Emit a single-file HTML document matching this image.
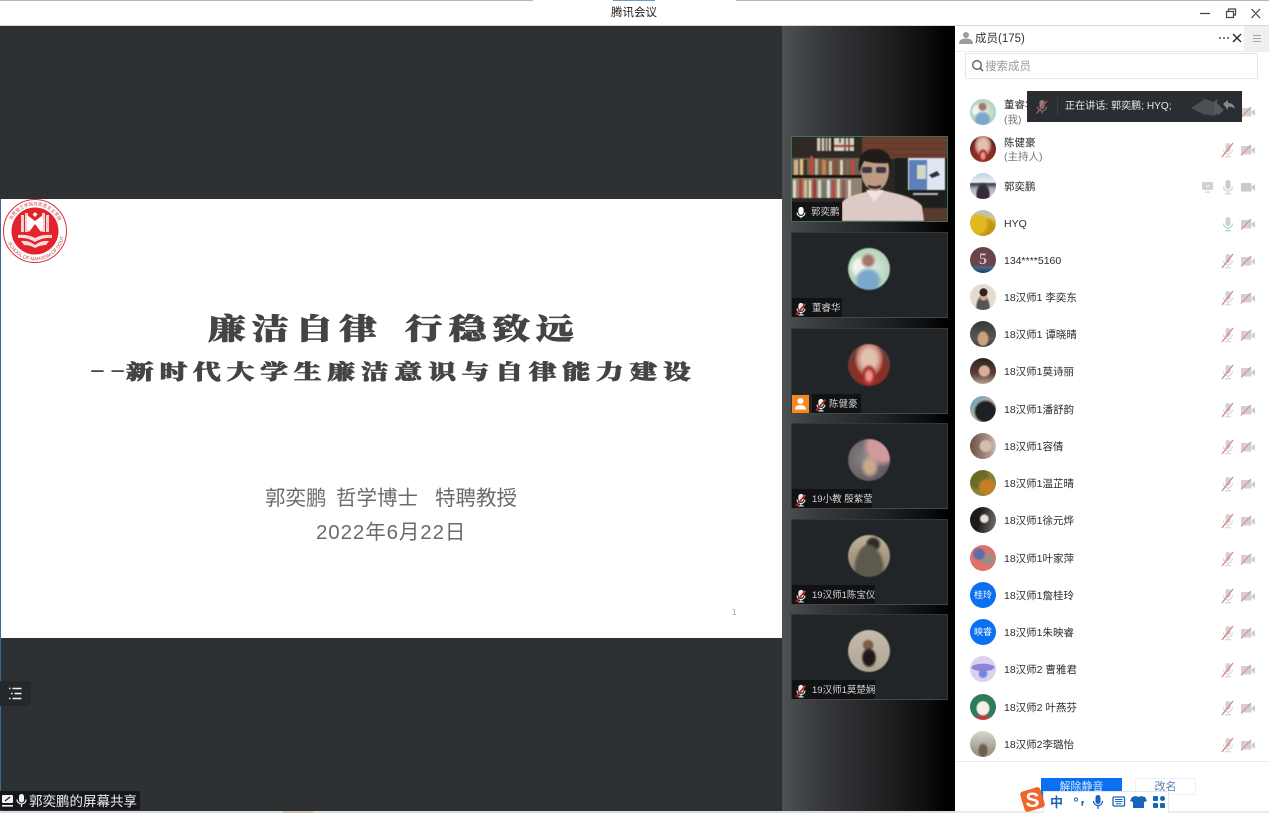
<!DOCTYPE html>
<html lang="zh"><head><meta charset="utf-8"><title>腾讯会议</title>
<style>
*{box-sizing:border-box}
html,body{margin:0;padding:0;width:1269px;height:813px;overflow:hidden;background:#fff;font-family:"Liberation Sans","Noto Sans CJK SC",sans-serif}
body{filter:blur(.3px)}
.a{position:absolute;white-space:nowrap}
#main{position:absolute;left:0;top:26px;width:782px;height:785px;background:#2e3134}
#slide{position:absolute;left:1px;top:199px;width:781px;height:439px;background:#fff}
#side{position:absolute;left:782px;top:26px;width:173px;height:785px;background:linear-gradient(90deg,#4e5153 0,#37393c 22%,#202224 58%,#0c0c0d 85%,#000 95%,#000 100%)}
.th{position:absolute;left:791px;width:157px;height:86px;background:#222528;border:1px solid #34373a;border-bottom-color:#44474a}
.av{position:absolute;left:56px;top:15px;width:42px;height:42px;border-radius:50%;filter:blur(.5px)}
.lb{position:absolute;left:0;bottom:0;height:19px;background:#111214;color:#d4d4d4;font-size:9.5px;line-height:22px;padding:0 3px 0 20px;white-space:nowrap}
.lb svg{position:absolute;left:2px;top:4px}
.ti{position:absolute;font-family:"Noto Serif CJK SC","Noto Sans CJK SC",serif;font-weight:900;color:#444;white-space:nowrap;transform-origin:0 50%;-webkit-text-stroke:.7px #444}
#panel{position:absolute;left:955px;top:26px;width:314px;height:785px;background:#fff}
.r{position:absolute;left:955px;width:314px;height:37px;font-size:10.5px;line-height:39px;color:#2c2c2c}
.r>span{position:absolute;left:49px;top:0;white-space:nowrap}
.r i{position:absolute;left:15px;top:5px;width:26px;height:26px;border-radius:50%;display:block;font-style:normal;color:#fff;text-align:center;font-size:9px;line-height:26px}
.r svg{position:absolute;top:11px}
.r .mi{left:265px}.r .ca{left:285px}.r .sc{left:245px}
</style></head><body>
<svg width="0" height="0" style="position:absolute">
<symbol id="mu" viewBox="0 0 16 16"><rect x="5.500" y="1" width="5" height="9" rx="2.500" fill="#d2d2d2"/><path d="M3.500 7.500a4.500 4.500 0 0 0 9 0M8 12v2.500M5 14.800h6" fill="none" stroke="#d2d2d2" stroke-width="1"/><path d="M2 15L13 1" stroke="#d98585" stroke-width="1.400"/></symbol>
<symbol id="ms" viewBox="0 0 16 16"><rect x="5.500" y="1" width="5" height="9" rx="2.500" fill="#cacaca"/><path d="M3.500 7.500a4.500 4.500 0 0 0 9 0M8 12v2.500M5 14.800h6" fill="none" stroke="#cacaca" stroke-width="1"/></symbol>
<symbol id="mg" viewBox="0 0 16 16"><rect x="5.500" y="1" width="5" height="9" rx="2.500" fill="#cbd4cf"/><path d="M3.500 7.500a4.500 4.500 0 0 0 9 0M8 12v2.500M5 14.800h6" fill="none" stroke="#a0d0b6" stroke-width="1"/></symbol>
<symbol id="cu" viewBox="0 0 16 16"><rect x="1" y="4" width="10.500" height="8.500" rx="1" fill="#d6cfcf"/><path d="M12 7.500l3-2.500v7l-3-2.500z" fill="#cccccc"/><path d="M1 13.500L11 3" stroke="#d98f8f" stroke-width="1.200"/></symbol>
<symbol id="cs" viewBox="0 0 16 16"><rect x="1" y="4" width="10.500" height="8.500" rx="1" fill="#cacaca"/><path d="M12 7.500l3-2.500v7l-3-2.500z" fill="#cacaca"/></symbol>
<symbol id="wm" viewBox="0 0 16 16"><rect x="5" y="1" width="6" height="9" rx="3" fill="#eee"/><path d="M3.500 7.500a4.500 4.500 0 0 0 9 0M8 12v2.500M5 14.800h6" fill="none" stroke="#eee" stroke-width="1.300"/><path d="M2.500 14.500L13 2" stroke="#b5302f" stroke-width="2"/></symbol>
</svg>

<!-- title bar -->
<div class="a" style="left:0;top:0;width:533px;height:1px;background:#b4b6b8"></div>
<div class="a" style="left:613px;top:0;width:42px;height:1px;background:#6f9cc0"></div>
<div class="a" style="left:736px;top:0;width:533px;height:1px;background:#b4b6b8"></div>
<div class="a" style="left:0;top:25px;width:1269px;height:1px;background:#d8d8d8"></div>
<div class="a" style="left:594px;width:80px;text-align:center;top:5px;font-size:11.500px;line-height:17px;color:#222">腾讯会议</div>
<svg class="a" style="left:1195px;top:5px" width="70" height="16" fill="none" stroke="#444" stroke-width="1.200"><path d="M5 8.500h10M31.500 6.500h7v6h-7zM33.500 6.500v-2.500h7v6h-2M56.500 4l8.500 9M65 4l-8.500 9"/></svg>

<div id="main"></div>
<div class="a" style="left:0;top:199px;width:1px;height:612px;background:#3d6a94"></div>

<!-- slide -->
<div id="slide"></div>
<svg class="a" style="left:2px;top:198px" width="68" height="68" viewBox="0 0 68 68">
<circle cx="33" cy="33" r="31.500" fill="#fff" stroke="#d8333a" stroke-width="1"/>
<circle cx="33" cy="33" r="23.500" fill="#e2232b"/>
<path id="tp" d="M3.500 33a29.500 29.500 0 0 0 59 0" fill="none"/>
<text font-size="4.800" fill="#c9474c" font-family="Liberation Sans"><textPath href="#tp" startOffset="12">SCHOOL OF MARXISM OF DGUT</textPath></text>
<path id="tq" d="M7.500 33a25.500 25.500 0 0 1 51 0" fill="none"/>
<text font-size="4.500" fill="#c9474c" font-family="Noto Sans CJK SC"><textPath href="#tq" startOffset="11">东莞理工学院马克思主义学院</textPath></text>
<path d="M19 17h3v17h-3zM23 15h3v19h-3zM40 15h3v19h-3zM44 17h3v17h-3z" fill="#f4d0d0"/>
<path d="M25 17l8 6 8-6v14l-2 3-6-8-6 8-2-3z" fill="#fff"/>
<path d="M33 14l2.500 2.500-2.500 2.500-2.500-2.500z" fill="#fff"/>
<path d="M16 37q9-1 17 3 8-4 17-3v3q-9-1-17 4-8-5-17-4zM19 43q8-1 14 4 6-5 14-4l-3 4q-6 0-11 3-5-3-11-3z" fill="#f7dcdc"/>
</svg>
<div class="ti" style="left:208px;top:308px;font-size:29px;line-height:40px;letter-spacing:4.600px;transform:scaleX(1.300)">廉洁自律</div>
<div class="ti" style="left:405px;top:308px;font-size:29px;line-height:40px;letter-spacing:4.600px;transform:scaleX(1.300)">行稳致远</div>
<div class="ti" style="left:89px;top:355px;font-size:22px;line-height:30px;letter-spacing:1.500px;transform:scaleX(2.300);font-family:'Liberation Sans',sans-serif;font-weight:400;-webkit-text-stroke:0">--</div>
<div class="ti" style="left:126px;top:355px;font-size:20.500px;line-height:30px;letter-spacing:4.400px;transform:scaleX(1.348)">新时代大学生廉洁意识与自律能力建设</div>
<div class="a" style="left:265px;top:485px;font-size:20.500px;line-height:28px;color:#6b6b6b">郭奕鹏</div>
<div class="a" style="left:336px;top:485px;font-size:20.500px;line-height:28px;color:#6b6b6b">哲学博士</div>
<div class="a" style="left:435px;top:485px;font-size:20.500px;line-height:28px;color:#6b6b6b">特聘教授</div>
<div class="a" style="left:316px;top:519px;font-size:20.500px;line-height:28px;color:#6b6b6b;letter-spacing:.9px">2022年6月22日</div>
<div class="a" style="left:732px;top:608px;font-size:8px;line-height:10px;color:#999">1</div>

<!-- bottom-left controls -->
<div class="a" style="left:0;top:681px;width:31px;height:25px;background:#25282b;border-radius:0 3px 3px 0"></div>
<svg class="a" style="left:8px;top:686px" width="16" height="15" fill="none" stroke="#f2f2f2" stroke-width="1.400"><path d="M4.500 2.500h9M6.500 7.500h7M4.500 12.500h9M1 2.500h1.500M3 7.500h1.500M1 12.500h1.500"/></svg>
<div class="a" style="left:0;top:791px;width:140px;height:19px;background:#15171a"></div>
<svg class="a" style="left:2px;top:794px" width="26" height="15"><rect x="0" y="1" width="11" height="8" rx="1" fill="#f2f2f2"/><path d="M3 7l5-4" stroke="#15171a" stroke-width="1.200"/><rect x="0" y="11" width="11" height="1.600" fill="#f2f2f2"/><rect x="17" y="0" width="5" height="8.500" rx="2.500" fill="#f2f2f2"/><path d="M15 5.500a4.500 4.500 0 0 0 9 0M19.500 10.500v2.500" fill="none" stroke="#f2f2f2" stroke-width="1.200"/></svg>
<div class="a" style="left:29px;top:792px;font-size:13.500px;line-height:19px;color:#f0f0f0">郭奕鹏的屏幕共享</div>
<div class="a" style="left:0;top:811px;width:955px;height:2px;background:#d9dcdf"></div>
<div class="a" style="left:283px;top:811px;width:30px;height:2px;background:#cfc4ae"></div>

<!-- side strip -->
<div id="side"></div>

<!-- speaker video -->
<div class="th" style="top:136px;border:1px solid #41705a;background:#2a2422;overflow:hidden">
<svg width="155" height="84" viewBox="792 137 155 84" style="position:absolute;left:0;top:0;filter:blur(.5px)">
<rect x="792" y="137" width="155" height="84" fill="#2b2623"/>
<rect x="858" y="137" width="89" height="22" fill="#6e3f31"/>
<path d="M860 143h87M860 149h87M860 155h87" stroke="#56352b" stroke-width="1"/>
<rect x="792" y="137" width="70" height="60" fill="#2e2924"/>
<rect x="817" y="138" width="14" height="13" fill="#cfc6b5"/><rect x="834" y="138" width="20" height="13" fill="#d8cfc0"/><path d="M821 138v13M825 138v13M828 138v13M840 138v5M845 138v13M849 138v13" stroke="#5b4c3f" stroke-width="1.500"/><path d="M834 146h20" stroke="#a2473c" stroke-width="2"/>
<rect x="792" y="158" width="70" height="17" fill="#73614f"/>
<g><rect x="794" y="160" width="4" height="15" fill="#c9b28b"/><rect x="800" y="159" width="3" height="16" fill="#d8c080"/><rect x="804" y="160" width="3" height="15" fill="#402f27"/><rect x="810" y="156" width="3" height="19" fill="#c8473c"/><rect x="815" y="159" width="3" height="16" fill="#c0ad8c"/><rect x="822" y="160" width="4" height="15" fill="#c97f45"/><rect x="829" y="161" width="3" height="14" fill="#c9bfa8"/><rect x="834" y="160" width="3" height="15" fill="#8c4a3a"/><rect x="840" y="160" width="3" height="15" fill="#d9d0bd"/><rect x="846" y="160" width="3" height="15" fill="#7b6a55"/><rect x="851" y="160" width="3" height="15" fill="#c8473c"/></g>
<rect x="792" y="175" width="70" height="3" fill="#171412"/>
<rect x="792" y="178" width="70" height="20" fill="#8f8270"/>
<g><rect x="793" y="180" width="3" height="18" fill="#ddd2c0"/><rect x="799" y="179" width="3" height="19" fill="#b14036"/><rect x="804" y="180" width="3" height="18" fill="#d4b98a"/><rect x="809" y="180" width="2" height="18" fill="#e6e0d2"/><rect x="813" y="179" width="3" height="19" fill="#a23a32"/><rect x="818" y="180" width="3" height="18" fill="#d8d0c0"/><rect x="823" y="181" width="2" height="17" fill="#597b6a"/><rect x="827" y="180" width="3" height="18" fill="#ddd"/><rect x="832" y="180" width="3" height="18" fill="#b44b3f"/><rect x="837" y="179" width="3" height="19" fill="#d8cfb8"/><rect x="842" y="180" width="3" height="18" fill="#955"/><rect x="848" y="180" width="3" height="18" fill="#e0d8c8"/></g>
<rect x="792" y="198" width="52" height="23" fill="#2a2523"/>
<rect x="895" y="158" width="52" height="63" fill="#1c1f1c"/>
<rect x="908" y="158" width="37" height="32" fill="#dfe6f2"/><rect x="909" y="160" width="18" height="30" fill="#5e7fb8"/><rect x="917" y="165" width="9" height="14" fill="#d0d8c4"/><path d="M929 175l8-4 3 4-8 3z" fill="#2b3140"/>
<rect x="913" y="193" width="25" height="2" fill="#bbb"/>
<rect x="923" y="208" width="24" height="13" fill="#5a3a30"/>
<path d="M842 221v-18q2-6 20-10l14-4 18 4q22 5 28 13l2 15z" fill="#ddcac6"/>
<path d="M866 190l8 12 10-12" fill="#f0e4e0"/>
<ellipse cx="875" cy="170" rx="14" ry="21" fill="#bd9a84"/>
<path d="M859 172q-3-23 16-23 19 0 16 23l-3-9q-12 1-24-2z" fill="#211b1a"/>
<rect x="862" y="167" width="10" height="6" rx="2" fill="#3e3648"/><rect x="876" y="167" width="10" height="6" rx="2" fill="#3e3648"/>
<path d="M868 186q7 3 13 0" stroke="#3f2a26" stroke-width="2.500" fill="none"/>
</svg>
<div class="lb" style="width:50px;background:rgba(17,18,20,.88)"><svg width="14" height="14" viewBox="0 0 16 16"><rect x="5" y="1" width="6" height="9" rx="3" fill="#fff"/><path d="M3.500 7.500a4.500 4.500 0 0 0 9 0M8 12v2" fill="none" stroke="#fff" stroke-width="1.300"/></svg><span style="margin-left:-1px">郭奕鹏</span></div>
</div>

<div class="th" style="top:232px"><div class="av" style="background:radial-gradient(circle at 48% 78%,#7aa8cc 0 24%,transparent 36%),radial-gradient(circle at 48% 30%,#a5766a 0 12%,transparent 22%),radial-gradient(circle at 30% 45%,#f2f4ec 0 18%,transparent 30%),radial-gradient(circle at 50% 50%,#e7efe6 0,#9cc6a8 100%)"></div><div class="lb" style="width:50px"><svg width="14" height="14"><use href="#wm"/></svg>董睿华</div></div>
<div class="th" style="top:328px"><div class="av" style="background:radial-gradient(ellipse at 50% 76%,#e8968a 0 8%,#ab302c 18%,transparent 27%),radial-gradient(ellipse at 50% 36%,#e0c0b0 0 24%,#c98a78 38%,transparent 50%),radial-gradient(circle at 50% 62%,#8a2f24 0 48%,#5d4540 72%)"></div><div style="position:absolute;left:0;bottom:0;width:17px;height:18px;background:#f5881f"><svg width="17" height="18"><circle cx="8.500" cy="6" r="3" fill="#fff"/><path d="M3 14.500q0-4.500 5.500-4.500t5.500 4.500z" fill="#fff"/></svg></div><div class="lb" style="left:20px;width:49px;padding-left:17px"><svg width="14" height="14"><use href="#wm"/></svg>陈健豪</div></div>
<div class="th" style="top:423px"><div class="av" style="background:radial-gradient(ellipse at 52% 66%,#c9a98e 0 16%,transparent 30%),radial-gradient(circle at 82% 18%,#cf9a9b 0 28%,transparent 42%),radial-gradient(circle at 40% 45%,#8a8488,#5f5a60 75%)"></div><div class="lb" style="width:80px"><svg width="14" height="14"><use href="#wm"/></svg>19小教 殷紫莹</div></div>
<div class="th" style="top:519px"><div class="av" style="background:radial-gradient(ellipse at 50% 80%,#5c5a4c 0 42%,transparent 54%),radial-gradient(circle at 48% 44%,#6b5644 0 20%,transparent 30%),radial-gradient(circle at 60% 22%,#2f2a26 0 12%,transparent 20%),linear-gradient(#bfb09a,#8e8370)"></div><div class="lb" style="width:83px"><svg width="14" height="14"><use href="#wm"/></svg>19汉师1陈宝仪</div></div>
<div class="th" style="top:614px"><div class="av" style="background:radial-gradient(ellipse at 50% 66%,#1e1a1a 0 18%,transparent 27%),radial-gradient(circle at 48% 36%,#7c5f48 0 12%,transparent 18%),linear-gradient(#c7bcab,#b0a594)"></div><div class="lb" style="width:83px"><svg width="14" height="14"><use href="#wm"/></svg>19汉师1莫楚娴</div></div>

<!-- member panel -->
<div id="panel"></div>
<div class="a" style="left:955px;top:51px;width:314px;height:1px;background:#eceef0"></div>
<svg class="a" style="left:959px;top:31px" width="14" height="14"><circle cx="7" cy="4" r="3" fill="#9c9c9c"/><path d="M0 13q0-5.500 7-5.500t7 5.500z" fill="#9c9c9c"/></svg>
<div class="a" style="left:975px;top:31px;font-size:11.500px;line-height:16px;color:#333">成员(175)</div>
<svg class="a" style="left:1218px;top:32px" width="26" height="12"><circle cx="2" cy="6" r="1" fill="#555"/><circle cx="6" cy="6" r="1" fill="#555"/><circle cx="10" cy="6" r="1" fill="#555"/><path d="M15 2l8 8M23 2l-8 8" stroke="#222" stroke-width="1.300"/></svg>
<div class="a" style="left:1244px;top:26px;width:25px;height:25px;background:#eef0f2"></div>
<svg class="a" style="left:1252px;top:34px" width="10" height="9" stroke="#a5a8ab"><path d="M1 1.500h8M1 4.500h8M1 7.500h8"/></svg>
<div class="a" style="left:965px;top:53px;width:293px;height:26px;border:1px solid #e4e6e8;border-radius:1px"></div>
<svg class="a" style="left:971px;top:59px" width="13" height="13" fill="none" stroke="#555" stroke-width="1.300"><circle cx="6" cy="6" r="4.300"/><path d="M9 9l3 3"/></svg>
<div class="a" style="left:985px;top:59px;font-size:11.500px;line-height:16px;color:#999">搜索成员</div>

<div class="r" style="top:93px;line-height:14px"><i style="background:radial-gradient(circle at 48% 78%,#7aa8cc 0 24%,transparent 36%),radial-gradient(circle at 48% 30%,#a5766a 0 12%,transparent 22%),radial-gradient(circle at 30% 45%,#f2f4ec 0 18%,transparent 30%),radial-gradient(circle at 50% 50%,#e7efe6 0,#9cc6a8 100%);top:6px"></i><span style="top:5px">董睿华</span><span style="top:20px;color:#777">(我)</span><svg class="ca" style="top:11px" width="16" height="16"><use href="#cu"/></svg></div>
<div class="r" style="top:131px;line-height:14px"><i style="background:radial-gradient(ellipse at 50% 76%,#e8968a 0 8%,#ab302c 18%,transparent 27%),radial-gradient(ellipse at 50% 36%,#e0c0b0 0 24%,#c98a78 38%,transparent 50%),radial-gradient(circle at 50% 62%,#8a2f24 0 48%,#4b2420 75%)"></i><span style="top:5px">陈健豪</span><span style="top:19px;color:#777">(主持人)</span><svg class="mi" width="16" height="16"><use href="#mu"/></svg><svg class="ca" width="16" height="16"><use href="#cu"/></svg></div>
<div class="r" style="top:168px"><i style="background:radial-gradient(ellipse at 50% 85%,#352a35 0 30%,transparent 42%),linear-gradient(#c4d0e0 0,#e8eef4 35%,#3a3a45 42%,#a9b0c0 60%,#e2e2e8 100%)"></i><span>郭奕鹏</span><svg class="sc" width="16" height="16"><rect x="2" y="3" width="11" height="8" rx="1" fill="#cfd2d2"/><path d="M6 8l3-2" stroke="#fff"/><rect x="5" y="12.500" width="5" height="1.200" fill="#cfd2d2"/></svg><svg class="mi" width="16" height="16"><use href="#ms"/></svg><svg class="ca" width="16" height="16"><use href="#cs"/></svg></div>
<div class="r" style="top:205px"><i style="background:radial-gradient(circle at 30% 55%,#e2b71f 0 35%,transparent 50%),radial-gradient(circle at 65% 70%,#c4960f 0 30%,transparent 45%),linear-gradient(#b9c1c9,#dec44c 55%,#c39a14)"></i><span>HYQ</span><svg class="mi" width="16" height="16"><use href="#mg"/></svg><svg class="ca" width="16" height="16"><use href="#cu"/></svg></div>
<div class="r" style="top:242px"><i style="background:linear-gradient(#6b434c 0,#6b434c 70%,#3f6a93 78%,#26364d 100%);color:#cfc4bd;font-size:16px;font-weight:700;font-family:'Liberation Serif',serif">5</i><span>134****5160</span><svg class="mi" width="16" height="16"><use href="#mu"/></svg><svg class="ca" width="16" height="16"><use href="#cu"/></svg></div>
<div class="r" style="top:279px"><i style="background:radial-gradient(circle at 52% 32%,#2b2420 0 16%,transparent 20%),radial-gradient(circle at 52% 50%,#d9a98a 0 16%,transparent 22%),radial-gradient(ellipse at 50% 95%,#555 0 32%,transparent 42%),#e3dccf"></i><span>18汉师1 李奕东</span><svg class="mi" width="16" height="16"><use href="#mu"/></svg><svg class="ca" width="16" height="16"><use href="#cu"/></svg></div>
<div class="r" style="top:316px"><i style="background:radial-gradient(ellipse at 50% 68%,#c9a27b 0 24%,transparent 34%),linear-gradient(#34383c,#5d5750 70%,#3d3a36)"></i><span>18汉师1 谭晓晴</span><svg class="mi" width="16" height="16"><use href="#mu"/></svg><svg class="ca" width="16" height="16"><use href="#cu"/></svg></div>
<div class="r" style="top:353px"><i style="background:radial-gradient(circle at 55% 50%,#d9ae9c 0 24%,transparent 34%),linear-gradient(#2c2420,#5b3f34 60%,#b9a394)"></i><span>18汉师1莫诗丽</span><svg class="mi" width="16" height="16"><use href="#mu"/></svg><svg class="ca" width="16" height="16"><use href="#cu"/></svg></div>
<div class="r" style="top:391px"><i style="background:radial-gradient(circle at 60% 60%,#1e2124 0 42%,transparent 55%),linear-gradient(135deg,#5b9ac1,#c8b89a 60%)"></i><span>18汉师1潘舒韵</span><svg class="mi" width="16" height="16"><use href="#mu"/></svg><svg class="ca" width="16" height="16"><use href="#cu"/></svg></div>
<div class="r" style="top:428px"><i style="background:radial-gradient(circle at 60% 50%,#d5bbb0 0 24%,transparent 34%),linear-gradient(90deg,#6b5148,#ab8f85 70%,#cfc0b8)"></i><span>18汉师1容倩</span><svg class="mi" width="16" height="16"><use href="#mu"/></svg><svg class="ca" width="16" height="16"><use href="#cu"/></svg></div>
<div class="r" style="top:465px"><i style="background:radial-gradient(circle at 65% 65%,#c47f23 0 26%,transparent 40%),radial-gradient(circle at 30% 30%,#6d6b2a 0 35%,transparent 50%),#8a8238"></i><span>18汉师1温芷晴</span><svg class="mi" width="16" height="16"><use href="#mu"/></svg><svg class="ca" width="16" height="16"><use href="#cu"/></svg></div>
<div class="r" style="top:502px"><i style="background:radial-gradient(circle at 55% 45%,#e5e2dc 0 16%,transparent 26%),linear-gradient(100deg,#1c1a1a 35%,#77736e)"></i><span>18汉师1徐元烨</span><svg class="mi" width="16" height="16"><use href="#mu"/></svg><svg class="ca" width="16" height="16"><use href="#cu"/></svg></div>
<div class="r" style="top:540px"><i style="background:radial-gradient(circle at 35% 35%,#5a6da8 0 18%,transparent 30%),radial-gradient(circle at 70% 55%,#9b8e86 0 20%,transparent 34%),#e2716c"></i><span>18汉师1叶家萍</span><svg class="mi" width="16" height="16"><use href="#mu"/></svg><svg class="ca" width="16" height="16"><use href="#cu"/></svg></div>
<div class="r" style="top:577px"><i style="background:#0a6ff0">桂玲</i><span>18汉师1詹桂玲</span><svg class="mi" width="16" height="16"><use href="#mu"/></svg><svg class="ca" width="16" height="16"><use href="#cu"/></svg></div>
<div class="r" style="top:614px"><i style="background:#0a6ff0">映睿</i><span>18汉师1朱映睿</span><svg class="mi" width="16" height="16"><use href="#mu"/></svg><svg class="ca" width="16" height="16"><use href="#cu"/></svg></div>
<div class="r" style="top:651px"><i style="background:radial-gradient(circle at 50% 68%,#6d87dc 0 14%,transparent 24%),radial-gradient(ellipse 46% 15% at 50% 44%,#8d83d8 0 90%,transparent 100%),#dcd0ee"></i><span>18汉师2 曹雅君</span><svg class="mi" width="16" height="16"><use href="#mu"/></svg><svg class="ca" width="16" height="16"><use href="#cu"/></svg></div>
<div class="r" style="top:689px"><i style="background:radial-gradient(ellipse at 50% 55%,#f4efe8 0 30%,transparent 40%),radial-gradient(circle at 50% 100%,#b93f3f 0 18%,transparent 28%),#2f7a58"></i><span>18汉师2 叶燕芬</span><svg class="mi" width="16" height="16"><use href="#mu"/></svg><svg class="ca" width="16" height="16"><use href="#cu"/></svg></div>
<div class="r" style="top:726px"><i style="background:radial-gradient(ellipse at 50% 75%,#6f5d4c 0 18%,transparent 30%),linear-gradient(#d6d6ce,#9a9888 80%)"></i><span>18汉师2李璐怡</span><svg class="mi" width="16" height="16"><use href="#mu"/></svg><svg class="ca" width="16" height="16"><use href="#cu"/></svg></div>

<div class="a" style="left:955px;top:761px;width:314px;height:1px;background:#e8eaec"></div>
<div class="a" style="left:1041px;top:778px;width:81px;height:23px;background:#0a6ff0;color:#d9e8fb;text-align:center;font-size:11px;line-height:19px">解除静音</div>
<div class="a" style="left:1135px;top:778px;width:61px;height:17px;background:#fff;border:1px solid #edf0f4;color:#5b7fb5;text-align:center;font-size:11px;line-height:16px">改名</div>

<!-- IME -->
<div class="a" style="left:955px;top:811px;width:314px;height:2px;background:#e6ecf3"></div>
<div class="a" style="left:1043px;top:791px;width:126px;height:22px;background:#fff;border:1px solid #dfe7f3;border-bottom:0"></div>
<svg class="a" style="left:1019px;top:786px" width="28" height="27"><rect x="3" y="3" width="21" height="21" rx="3" fill="#f0662a" transform="rotate(-17 13.500 13.500)"/><text x="6.500" y="21" font-size="21" font-weight="700" fill="#fff" font-family="Liberation Sans">S</text></svg>
<div class="a" style="left:1050px;top:794px;font-size:13px;font-weight:700;line-height:17px;color:#1566b8">中</div>
<svg class="a" style="left:1072px;top:794px" width="95" height="17" fill="#1566b8"><circle cx="4" cy="5.500" r="1.600" fill="none" stroke="#1566b8"/><path d="M9.500 7h2.500l-1.500 5h-1z"/><rect x="23.500" y="1" width="5" height="9" rx="2.500"/><path d="M21.500 7a4.500 4.500 0 0 0 9 0M26 12v3" fill="none" stroke="#1566b8" stroke-width="1.300"/><rect x="41" y="3" width="11.500" height="9" rx="1" fill="none" stroke="#1566b8" stroke-width="1.300"/><path d="M43 5.500h7.500M43 7.500h7.500M44 9.700h5.500" stroke="#1566b8"/><path d="M60 3l4-1q2.500 1.500 5 0l4 1 2 4-3 1v6h-11V8l-3-1z"/><rect x="81" y="2" width="5" height="5" rx="1"/><rect x="88" y="2" width="5" height="5" rx="2.500"/><rect x="81" y="9" width="5" height="5" rx="1"/><rect x="88" y="9" width="5" height="5" rx="1"/></svg>

<!-- speaking toast -->
<div class="a" style="left:1027px;top:91px;width:215px;height:31px;background:#2a2d31"></div>
<svg class="a" style="left:1034px;top:99px" width="16" height="16"><rect x="5.500" y="1" width="5" height="9" rx="2.500" fill="#8a7f7f"/><path d="M3.500 7.500a4.500 4.500 0 0 0 9 0M8 12v2.500" fill="none" stroke="#8a7f7f"/><path d="M2.500 14.500L13 2" stroke="#a5524f" stroke-width="1.500"/></svg>
<div class="a" style="left:1057px;top:97px;width:1px;height:19px;background:#3a3d41"></div>
<div class="a" style="left:1065px;top:99px;font-size:10.100px;line-height:16px;color:#e8e8e8">正在讲话: 郭奕鹏; HYQ;</div>
<svg class="a" style="left:1190px;top:95px" width="46" height="24"><path d="M1 13l14-9v16zM15 4l9 3v14l-9-2z" fill="#4c5054"/><path d="M24 7l3-3 0 14-3 3zM27 8l7 7-7 6z" fill="#565a5e"/><path d="M33 9l5-4v3q6 0 7 6-3-3-7-2v3z" fill="#85898d"/></svg>
</body></html>
